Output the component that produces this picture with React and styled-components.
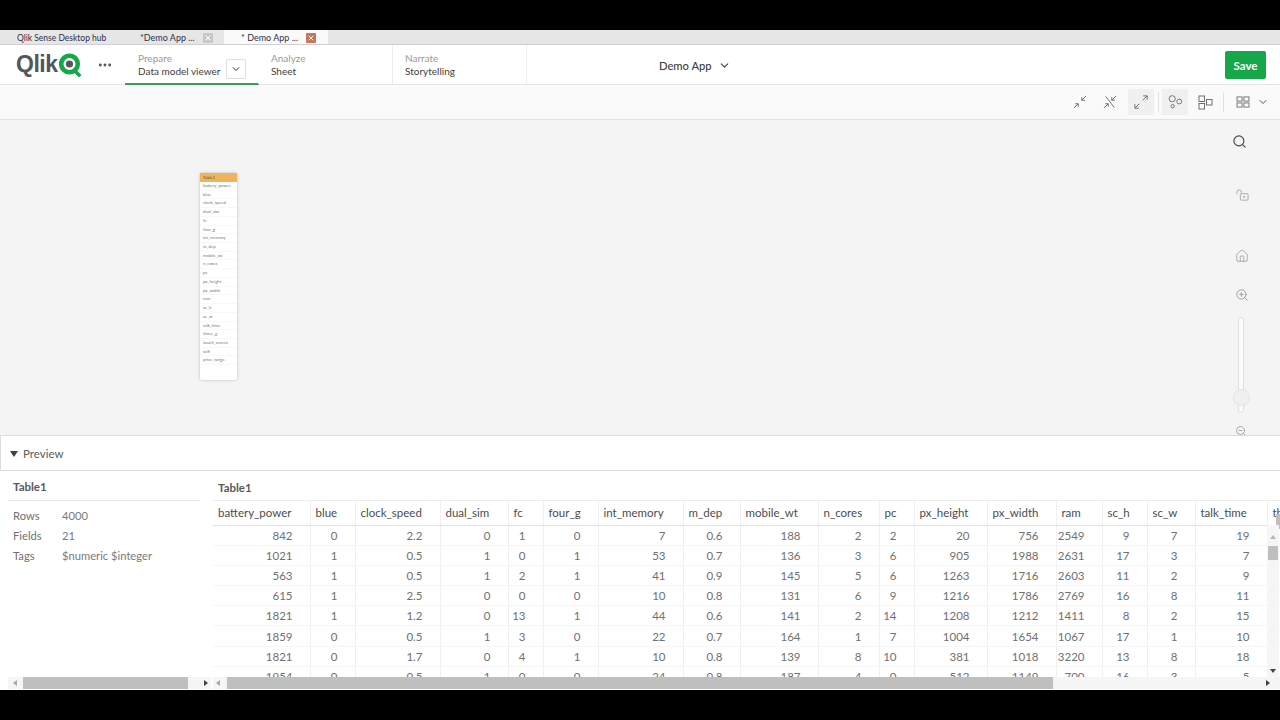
import React from 'react';
import styled, { createGlobalStyle } from 'styled-components';
import { ChevronDown, Ellipsis, Search, Home, ZoomIn, ZoomOut, X } from 'lucide-react';

const GlobalStyle = createGlobalStyle`
  html, body { margin: 0; padding: 0; background: #000; }
  body { font-family: "Lato", "Noto Sans", sans-serif; color: #404040; }
`;

const Page = styled.div`
  width: 1280px;
  height: 720px;
  overflow: hidden;
  display: flex;
  flex-direction: column;
  background: #000;
`;

const BlackBar = styled.div`
  flex: none;
  height: 30px;
  background: #000;
`;

const Screen = styled.div`
  flex: none;
  height: 660px;
  display: flex;
  flex-direction: column;
  background: #fff;
`;

const TabStrip = styled.div`
  flex: none;
  height: 15px;
  box-sizing: border-box;
  display: flex;
  background: #e6e6e6;
  border-bottom: 1px solid #cfcfcf;
`;

const BrowserTab = styled.div`
  width: ${p => p.$w}px;
  display: flex;
  align-items: center;
  padding: 1px 0 0 ${p => p.$pad}px;
  box-sizing: border-box;
  gap: 8px;
  font-size: ${p => p.$size || 9}px;
  color: #30304a;
  white-space: nowrap;
  background: ${p => (p.$active ? '#fafafa' : 'transparent')};
`;

const TabClose = styled.span`
  width: 10px;
  height: 10px;
  border-radius: 1px;
  display: flex;
  align-items: center;
  justify-content: center;
  color: #fff;
  background: ${p => (p.$active ? '#c8735a' : '#c8c8c8')};
`;

const AppHeader = styled.header`
  flex: none;
  height: 40px;
  box-sizing: border-box;
  display: flex;
  align-items: stretch;
  background: #fff;
  border-bottom: 1px solid #e6e6e6;
`;

const LogoBox = styled.div`
  width: 125px;
  display: flex;
  align-items: center;
  padding-left: 16px;
  box-sizing: border-box;
  color: #555;
`;

const LogoText = styled.span`
  font-family: "Liberation Sans", sans-serif;
  font-weight: 700;
  font-size: 23px;
  letter-spacing: -0.5px;
  color: #54565a;
  line-height: 1;
`;

const MoreIcon = styled(Ellipsis)`
  margin-left: 14px;
`;

const NavItem = styled.div`
  width: ${p => p.$w}px;
  box-sizing: border-box;
  margin-bottom: -1px;
  padding: 7px 0 0 ${p => p.$pad || 13}px;
  border-right: 1px solid ${p => (p.$active ? 'transparent' : '#ececec')};
  border-bottom: 2px solid ${p => (p.$active ? '#3f9a5c' : 'transparent')};
  display: flex;
  align-items: flex-start;
`;

const NavText = styled.div`
  width: 88px;
  display: flex;
  flex-direction: column;
  gap: 1px;
`;

const NavLabel = styled.span`
  font-size: 10px;
  line-height: 12px;
  color: #9a9a9a;
`;

const NavValue = styled.span`
  font-size: 10px;
  line-height: 13px;
  color: #404040;
  white-space: nowrap;
`;

const NavDrop = styled.span`
  width: 20px;
  height: 20px;
  margin-top: 7px;
  border: 1px solid #e0e0e0;
  border-radius: 2px;
  box-sizing: border-box;
  display: flex;
  align-items: center;
  justify-content: center;
  color: #404040;
`;

const AppTitle = styled.div`
  flex: 1;
  display: flex;
  align-items: center;
  padding: 1px 0 0 132px;
  gap: 6px;
  font-size: 11.2px;
  font-weight: 500;
  color: #404040;
`;

const SaveButton = styled.button`
  width: 41px;
  height: 28px;
  margin: 6px 14px 0 0;
  border: 0;
  border-radius: 2px;
  background: #16a74a;
  color: #fff;
  font: 700 11.5px "Lato", sans-serif;
  padding: 0;
`;

const Toolbar = styled.div`
  flex: none;
  height: 35px;
  box-sizing: border-box;
  display: flex;
  align-items: center;
  justify-content: flex-end;
  padding-right: 11px;
  background: #fafafa;
  border-bottom: 1px solid #e2e2e2;
`;

const ToolButton = styled.span`
  width: ${p => p.$w || 26}px;
  height: 26px;
  margin-left: ${p => p.$gap || 0}px;
  display: flex;
  align-items: center;
  justify-content: center;
  background: ${p => (p.$on ? '#f0f0f0' : 'transparent')};
  color: #6e6e6e;
`;

const ToolDivider = styled.span`
  width: 1px;
  height: 20px;
  margin: 0 ${p => p.$right}px 0 ${p => p.$left}px;
  background: #e2e2e2;
`;

const ToolChevron = styled(ChevronDown)`
  margin-left: 3px;
  color: #555;
`;

const Canvas = styled.main`
  flex: none;
  height: 315px;
  position: relative;
  overflow: hidden;
  background: #f4f4f4;
`;

const TableNode = styled.div`
  position: absolute;
  left: 200px;
  top: 53px;
  width: 37px;
  height: 207px;
  background: #fff;
  border-radius: 2px;
  box-shadow: 0 0 3px rgba(0, 0, 0, 0.25);
`;

const NodeHead = styled.div`
  height: 9px;
  background: #f0b25c;
  font-size: 4.3px;
  line-height: 9px;
  padding-left: 3px;
  color: #6a5230;
`;

const NodeField = styled.div`
  height: 8.73px;
  box-sizing: border-box;
  border-bottom: 1px solid #f8f8f8;
  font-size: 4.3px;
  line-height: 8px;
  padding-left: 3px;
  color: #777;
  white-space: nowrap;
`;

const SideTools = styled.div`
  position: absolute;
  right: 0;
  top: 0;
  bottom: 0;
  width: 80px;
`;

const SideIcon = styled.span`
  position: absolute;
  left: ${p => p.$x}px;
  top: ${p => p.$y}px;
  display: flex;
  color: ${p => p.$color || '#8f8f8f'};
`;

const SliderTrack = styled.div`
  position: absolute;
  left: 38px;
  top: 197px;
  width: 6px;
  height: 96px;
  box-sizing: border-box;
  border: 1px solid #e0e0e0;
  border-radius: 3px;
  background: #fbfbfb;
`;

const SliderThumb = styled.div`
  position: absolute;
  left: 33px;
  top: 269px;
  width: 17px;
  height: 17px;
  border-radius: 50%;
  background: #f0f0f0;
  border: 1px solid #e2e2e2;
  box-sizing: border-box;
`;

const PreviewBar = styled.div`
  flex: none;
  height: 36px;
  box-sizing: border-box;
  display: flex;
  align-items: center;
  gap: 5px;
  padding-left: 9px;
  background: #fff;
  border: 1px solid #dcdcdc;
  border-right: 0;
  font-size: 11.5px;
  color: #5a5a5a;
`;

const Triangle = styled.span`
  width: 0;
  height: 0;
  margin-top: 1px;
  border-left: 4.5px solid transparent;
  border-right: 4.5px solid transparent;
  border-top: 6px solid #404040;
`;

const PreviewBody = styled.div`
  flex: 1;
  min-height: 0;
  display: flex;
  position: relative;
  background: #fff;
`;

const InfoPane = styled.aside`
  width: 213px;
  flex: none;
  box-sizing: border-box;
  padding-left: 8px;
  padding-right: 13px;
`;

const PaneTitle = styled.div`
  height: 30px;
  box-sizing: border-box;
  padding: 9px 0 0 5px;
  font-size: 11.5px;
  font-weight: 700;
  line-height: 14px;
  color: #5a5a5a;
  border-bottom: 1px solid #e6e6e6;
`;

const InfoRows = styled.dl`
  margin: 5px 0 0 5px;
  display: grid;
  grid-template-columns: 49px 1fr;
  grid-auto-rows: 20px;
  font-size: 11.2px;
  line-height: 20px;
  dd { margin: 0; color: #7a7a7a; }
  dt { color: #707070; }
`;

const DataPane = styled.section`
  flex: 1;
  min-width: 0;
  display: flex;
  flex-direction: column;
  overflow: hidden;
`;

const DataTitle = styled.div`
  flex: none;
  height: 29px;
  box-sizing: border-box;
  padding: 10px 0 0 5px;
  font-size: 11.5px;
  line-height: 14px;
  font-weight: 700;
  color: #5a5a5a;
`;

const TableClip = styled.div`
  height: 177px;
  overflow: hidden;
`;

const DataTable = styled.table`
  table-layout: fixed;
  width: 1084px;
  border-collapse: collapse;
  font-size: 11.5px;
  color: #707070;
  th {
    height: 25px;
    padding: 0 0 2px 5px;
    text-align: left;
    font-weight: 400;
    color: #4c4c4c;
    font-size: 11.5px;
    box-sizing: border-box;
    border-top: 1px solid #ececec;
    border-bottom: 1px solid #e2e2e2;
    border-right: 1px solid #f0f0f0;
    overflow: hidden;
    white-space: nowrap;
  }
  td {
    height: 20.1px;
    padding: 0 17px 0 0;
    text-align: right;
    box-sizing: border-box;
    border-bottom: 1px solid #f6f6f6;
    border-right: 1px solid #f0f0f0;
  }
`;

const ScrollTrack = styled.div`
  position: absolute;
  left: ${p => p.$x}px;
  width: ${p => p.$w}px;
  bottom: 1px;
  height: 12px;
  background: #f5f5f5;
`;

const ScrollThumb = styled.span`
  position: absolute;
  left: ${p => p.$x}px;
  width: ${p => p.$w}px;
  top: 0;
  bottom: 0;
  background: #bfbfbf;
`;

const ScrollArrow = styled.span`
  position: absolute;
  ${p => (p.$side === 'left' ? `left: ${p.$at}px;` : `right: ${p.$at}px;`)}
  top: 2.5px;
  width: 0;
  height: 0;
  border-top: 3.5px solid transparent;
  border-bottom: 3.5px solid transparent;
  ${p => (p.$side === 'left' ? 'border-right: 4px solid #a8a8a8;' : 'border-left: 4px solid #404040;')}
`;

const VScroll = styled.div`
  position: absolute;
  right: 1px;
  top: 54px;
  width: 12px;
  height: 152px;
  background: #f6f6f6;
`;

const VThumb = styled.span`
  position: absolute;
  left: 1px;
  top: 21px;
  width: 10px;
  height: 14px;
  background: #bfbfbf;
`;

const VArrow = styled.span`
  position: absolute;
  left: 2.5px;
  ${p => (p.$down ? 'bottom: 4px;' : 'top: 10px;')}
  width: 0;
  height: 0;
  border-left: 3.5px solid transparent;
  border-right: 3.5px solid transparent;
  ${p => (p.$down ? 'border-top: 4px solid #404040;' : 'border-bottom: 4px solid #b8b8b8;')}
`;

const OuterThumb = styled.span`
  position: absolute;
  right: 0;
  top: 43px;
  width: 4px;
  height: 15px;
  background: #bfbfbf;
`;

const LogoMark = () => (
  <svg width="26" height="24" viewBox="0 0 26 24" fill="none">
    <circle cx="12.5" cy="11" r="8.3" stroke="#16a74a" strokeWidth="4.6" />
    <circle cx="12.5" cy="11" r="3.6" fill="#54565a" />
    <path d="M17.5 17.5 L22 22" stroke="#16a74a" strokeWidth="3.8" strokeLinecap="round" />
  </svg>
);

const ArrowsIn = ({ slash }) => (
  <svg width="14" height="14" viewBox="0 0 16 16" fill="none" stroke="currentColor" strokeWidth="1.1">
    <path d="M15 1 L10 6 M10 2.5 V6 H13.5" />
    <path d="M1 15 L6 10 M2.5 10 H6 V13.5" />
    {slash && <path d="M3 1.5 L13 14.5" />}
  </svg>
);

const ArrowsOut = () => (
  <svg width="14" height="14" viewBox="0 0 16 16" fill="none" stroke="currentColor" strokeWidth="1.1">
    <path d="M10 6 L15 1 M10.5 1 H15 V5.5" />
    <path d="M6 10 L1 15 M1 10.5 V15 H5.5" />
  </svg>
);

const Bubbles = () => (
  <svg width="15" height="14" viewBox="0 0 16 15" fill="none" stroke="currentColor" strokeWidth="1">
    <circle cx="4.5" cy="4" r="3.3" />
    <circle cx="12" cy="7" r="2.6" />
    <circle cx="5" cy="12" r="1.8" />
  </svg>
);

const Blocks = () => (
  <svg width="15" height="15" viewBox="0 0 15 15" fill="none" stroke="currentColor" strokeWidth="1">
    <rect x="1" y="1" width="5.5" height="5.5" />
    <rect x="1" y="8.5" width="5.5" height="5.5" />
    <rect x="8.5" y="4.5" width="5.5" height="5.5" />
  </svg>
);

const GridIcon = () => (
  <svg width="14" height="12" viewBox="0 0 15 13" fill="none" stroke="currentColor" strokeWidth="1">
    <rect x="1" y="1" width="5.5" height="4.5" />
    <rect x="8.5" y="1" width="5.5" height="4.5" />
    <rect x="1" y="7.5" width="5.5" height="4.5" />
    <rect x="8.5" y="7.5" width="5.5" height="4.5" />
  </svg>
);

const OpenLock = () => (
  <svg width="13" height="12" viewBox="0 0 15 14" fill="none" stroke="currentColor" strokeWidth="1">
    <rect x="5" y="5.5" width="9" height="7.5" rx="1" />
    <path d="M1 6 V3.6 A2.6 2.6 0 0 1 6.2 3.6 V5.5" />
    <circle cx="9.5" cy="9.2" r="0.7" fill="currentColor" />
  </svg>
);

const fields = ['battery_power', 'blue', 'clock_speed', 'dual_sim', 'fc', 'four_g', 'int_memory', 'm_dep', 'mobile_wt', 'n_cores', 'pc', 'px_height', 'px_width', 'ram', 'sc_h', 'sc_w', 'talk_time', 'three_g', 'touch_screen', 'wifi', 'price_range'];
const widths = [97, 45, 85, 68, 35, 55, 85, 57, 78, 61, 35, 73, 69, 46, 45, 48, 72, 30];
const rows = [
  [842, 0, 2.2, 0, 1, 0, 7, 0.6, 188, 2, 2, 20, 756, 2549, 9, 7, 19],
  [1021, 1, 0.5, 1, 0, 1, 53, 0.7, 136, 3, 6, 905, 1988, 2631, 17, 3, 7],
  [563, 1, 0.5, 1, 2, 1, 41, 0.9, 145, 5, 6, 1263, 1716, 2603, 11, 2, 9],
  [615, 1, 2.5, 0, 0, 0, 10, 0.8, 131, 6, 9, 1216, 1786, 2769, 16, 8, 11],
  [1821, 1, 1.2, 0, 13, 1, 44, 0.6, 141, 2, 14, 1208, 1212, 1411, 8, 2, 15],
  [1859, 0, 0.5, 1, 3, 0, 22, 0.7, 164, 1, 7, 1004, 1654, 1067, 17, 1, 10],
  [1821, 0, 1.7, 0, 4, 1, 10, 0.8, 139, 8, 10, 381, 1018, 3220, 13, 8, 18],
  [1954, 0, 0.5, 1, 0, 0, 24, 0.8, 187, 4, 0, 512, 1149, 700, 16, 3, 5],
];
const fmt = v => (v % 1 === 0 ? String(v) : v.toFixed(1));

export default function App() {
  return (
    <Page>
      <GlobalStyle />
      <BlackBar />
      <Screen>
        <TabStrip>
          <BrowserTab $w={120} $pad={17} $size={8.5}>Qlik Sense Desktop hub</BrowserTab>
          <BrowserTab $w={104} $pad={20}>*Demo App ...<TabClose><X size={8} strokeWidth={3} /></TabClose></BrowserTab>
          <BrowserTab $w={104} $pad={17} $active>* Demo App ...<TabClose $active><X size={8} strokeWidth={3} /></TabClose></BrowserTab>
        </TabStrip>
        <AppHeader>
          <LogoBox>
            <LogoText>Qlik</LogoText>
            <LogoMark />
            <MoreIcon size={16} strokeWidth={2.4} />
          </LogoBox>
          <NavItem $w={134} $active>
            <NavText>
              <NavLabel>Prepare</NavLabel>
              <NavValue>Data model viewer</NavValue>
            </NavText>
            <NavDrop><ChevronDown size={12} strokeWidth={2} /></NavDrop>
          </NavItem>
          <NavItem $w={134} $pad={12}>
            <NavText>
              <NavLabel>Analyze</NavLabel>
              <NavValue>Sheet</NavValue>
            </NavText>
          </NavItem>
          <NavItem $w={134} $pad={12}>
            <NavText>
              <NavLabel>Narrate</NavLabel>
              <NavValue>Storytelling</NavValue>
            </NavText>
          </NavItem>
          <AppTitle>Demo App <ChevronDown size={13} strokeWidth={2} /></AppTitle>
          <SaveButton>Save</SaveButton>
        </AppHeader>
        <Toolbar>
          <ToolButton><ArrowsIn /></ToolButton>
          <ToolButton $gap={4}><ArrowsIn slash /></ToolButton>
          <ToolButton $gap={5} $on><ArrowsOut /></ToolButton>
          <ToolDivider $left={4} $right={3} />
          <ToolButton $on><Bubbles /></ToolButton>
          <ToolButton $gap={4}><Blocks /></ToolButton>
          <ToolDivider $left={5} $right={8} />
          <ToolButton $w={22}><GridIcon /></ToolButton>
          <ToolChevron size={12} strokeWidth={2} />
        </Toolbar>
        <Canvas>
          <TableNode>
            <NodeHead>Table1</NodeHead>
            {fields.map(f => <NodeField key={f}>{f}</NodeField>)}
          </TableNode>
          <SideTools>
            <SideIcon $x={32} $y={14} $color="#444"><Search size={15} strokeWidth={1.8} /></SideIcon>
            <SideIcon $x={36} $y={69} $color="#a0a0a0"><OpenLock /></SideIcon>
            <SideIcon $x={35} $y={129}><Home size={14} strokeWidth={1.2} /></SideIcon>
            <SideIcon $x={35} $y={168}><ZoomIn size={14} strokeWidth={1.4} /></SideIcon>
            <SliderTrack />
            <SliderThumb />
            <SideIcon $x={35} $y={305}><ZoomOut size={12} strokeWidth={1.4} /></SideIcon>
          </SideTools>
        </Canvas>
        <PreviewBar><Triangle />Preview</PreviewBar>
        <PreviewBody>
          <InfoPane>
            <PaneTitle>Table1</PaneTitle>
            <InfoRows>
              <dt>Rows</dt><dd>4000</dd>
              <dt>Fields</dt><dd>21</dd>
              <dt>Tags</dt><dd>$numeric $integer</dd>
            </InfoRows>
          </InfoPane>
          <DataPane>
            <DataTitle>Table1</DataTitle>
            <TableClip>
              <DataTable>
                <colgroup>{widths.map((w, i) => <col key={i} style={{ width: w }} />)}</colgroup>
                <thead>
                  <tr>{widths.map((_, i) => <th key={i}>{fields[i]}</th>)}</tr>
                </thead>
                <tbody>
                  {rows.map((r, i) => (
                    <tr key={i}>
                      {widths.map((_, j) => <td key={j}>{j < r.length ? fmt(r[j]) : ''}</td>)}
                    </tr>
                  ))}
                </tbody>
              </DataTable>
            </TableClip>
          </DataPane>
          <OuterThumb />
          <VScroll><VArrow /><VThumb /><VArrow $down /></VScroll>
          <ScrollTrack $x={8} $w={203}>
            <ScrollArrow $side="left" $at={5} />
            <ScrollThumb $x={15} $w={165} />
            <ScrollArrow $side="right" $at={3} />
          </ScrollTrack>
          <ScrollTrack $x={213} $w={1067}>
            <ScrollArrow $side="left" $at={3} />
            <ScrollThumb $x={14} $w={826} />
            <ScrollArrow $side="right" $at={10} />
          </ScrollTrack>
        </PreviewBody>
      </Screen>
      <BlackBar />
    </Page>
  );
}
